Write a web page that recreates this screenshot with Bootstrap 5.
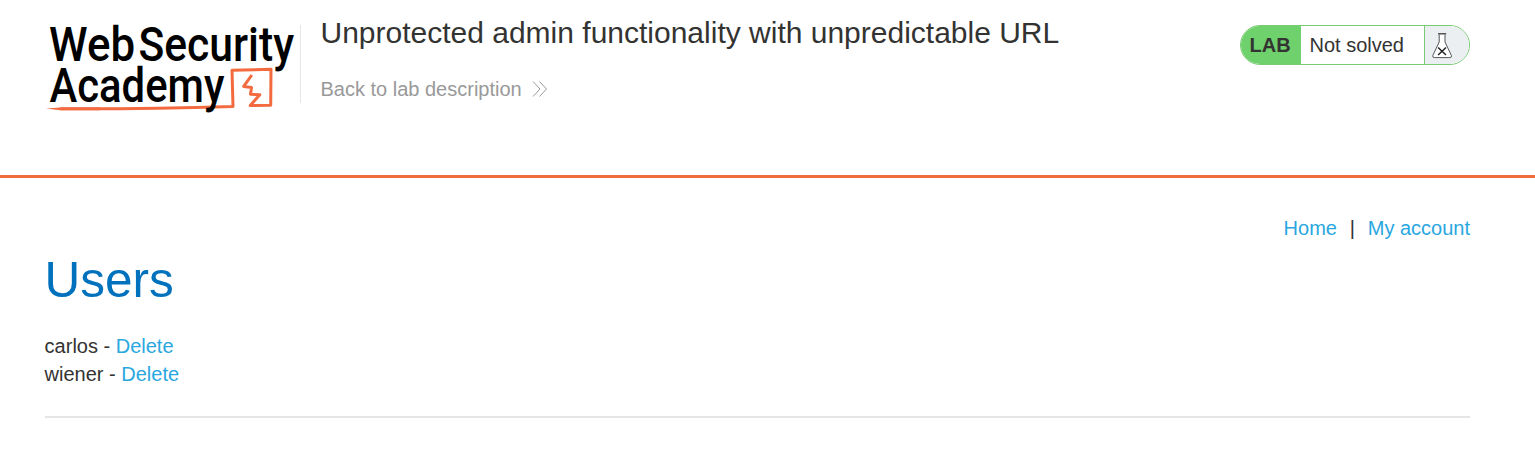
<!DOCTYPE html>
<html lang="en">
<head>
<meta charset="utf-8">
<meta name="viewport" content="width=device-width, initial-scale=1">
<title>Unprotected admin functionality with unpredictable URL</title>
<link href="https://cdn.jsdelivr.net/npm/bootstrap@5.3.0/dist/css/bootstrap.min.css" rel="stylesheet">
<style>
body{font-family:"Liberation Sans",Arial,sans-serif;font-size:20px;line-height:28px;color:#333332;background:#fff;overflow:hidden}
.page{padding:0 65px 0 44.6px}
.lab-header{height:178px;border-bottom:3px solid #f26b3d}
.brand{width:250px;height:95px;margin:20px 0 0 .4px;display:block;overflow:visible}
.brand text{font-family:Roboto,sans-serif;font-weight:500;font-size:48px;fill:#000}
.lab-title{height:78px;margin-top:25px;margin-left:5px;padding-left:19.5px;border-left:1px solid #e6e6e6}
.lab-title h2{font-size:30px;line-height:36px;margin:-10px 0 0;font-weight:400;white-space:nowrap}
.back{color:#999;margin-top:24px;gap:10px}
.lab-status{width:230px;height:40px;margin-top:25px;border:1px solid #79cb74;border-radius:20px;overflow:hidden;line-height:38px}
.tag{width:60px;background:#6fd16c;font-weight:700;padding-left:8.6px}
.state{width:124px;padding-left:8.5px;border-right:1px solid #79cb74}
.flask{background:#ebeff2;padding:7px 0 0 7px}
.top-links{padding-top:36px}
.sep{padding:0 12.8px}
a{color:#29a7df;text-decoration:none}
h1{font-size:49.5px;line-height:60px;color:#0071bc;margin:8px 0 22px;font-weight:400}
.rule{height:2px;background:#e5e5e5;margin-top:28px}
</style>
</head>
<body>
<header class="lab-header page d-flex align-items-start">
  <svg class="brand flex-shrink-0" viewBox="45 20 250 95" role="img" aria-label="Web Security Academy">
    <path d="M60 108.8C110 109 160 108.8 233 106.4L232 70.2L271 69.3L270.7 105.2L250.2 105.6L259.8 94.7L250.5 94.2L251.5 87.6L243.7 86.4L251.8 75" fill="none" stroke="#f26a3e" stroke-width="3" stroke-linejoin="round"/>
    <path d="M46 108.6L60 107.4L100 107.6V110.3L60 110.2Z" fill="#f26a3e"/>
    <text x="49" y="61" textLength="86" lengthAdjust="spacingAndGlyphs">Web</text>
    <text x="138.5" y="61" textLength="155.5" lengthAdjust="spacingAndGlyphs">Security</text>
    <text x="49.5" y="102" textLength="175" lengthAdjust="spacingAndGlyphs">Academy</text>
  </svg>
  <div class="lab-title">
    <h2>Unprotected admin functionality with unpredictable URL</h2>
    <a class="back d-flex align-items-center" href="#">Back to lab description
      <svg width="16" height="16" viewBox="0 0 16 16" fill="none" stroke="#999" stroke-width="1"><path d="M1 .5L8 8L1 15.5M7.5 .5L14.5 8L7.5 15.5"/></svg>
    </a>
  </div>
  <div class="lab-status d-flex ms-auto">
    <span class="tag">LAB</span><span class="state">Not solved</span>
    <span class="flask flex-grow-1 d-flex align-items-start">
      <svg width="21" height="26" viewBox="0 0 21 26"><path d="M7.2 1.5V9L.8 22.5Q.3 24.6 2.3 24.6H17.8Q19.9 24.6 19.4 22.5L13 9V1.5" fill="#fff" stroke="#555" stroke-width="1"/><path d="M6 .8H14.2" stroke="#555" stroke-width="1.4"/><path d="M6.1 14.5L14 22M14 14.5L6.1 22" stroke="#222" stroke-width="1.5"/></svg>
    </span>
  </div>
</header>
<main class="page">
  <nav class="top-links d-flex justify-content-end"><a href="#">Home</a><span class="sep">|</span><a href="#">My account</a></nav>
  <h1>Users</h1>
  <div>carlos - <a href="#">Delete</a></div>
  <div>wiener - <a href="#">Delete</a></div>
  <div class="rule"></div>
</main>
<script src="https://cdn.jsdelivr.net/npm/bootstrap@5.3.0/dist/js/bootstrap.bundle.min.js"></script>
</body>
</html>
